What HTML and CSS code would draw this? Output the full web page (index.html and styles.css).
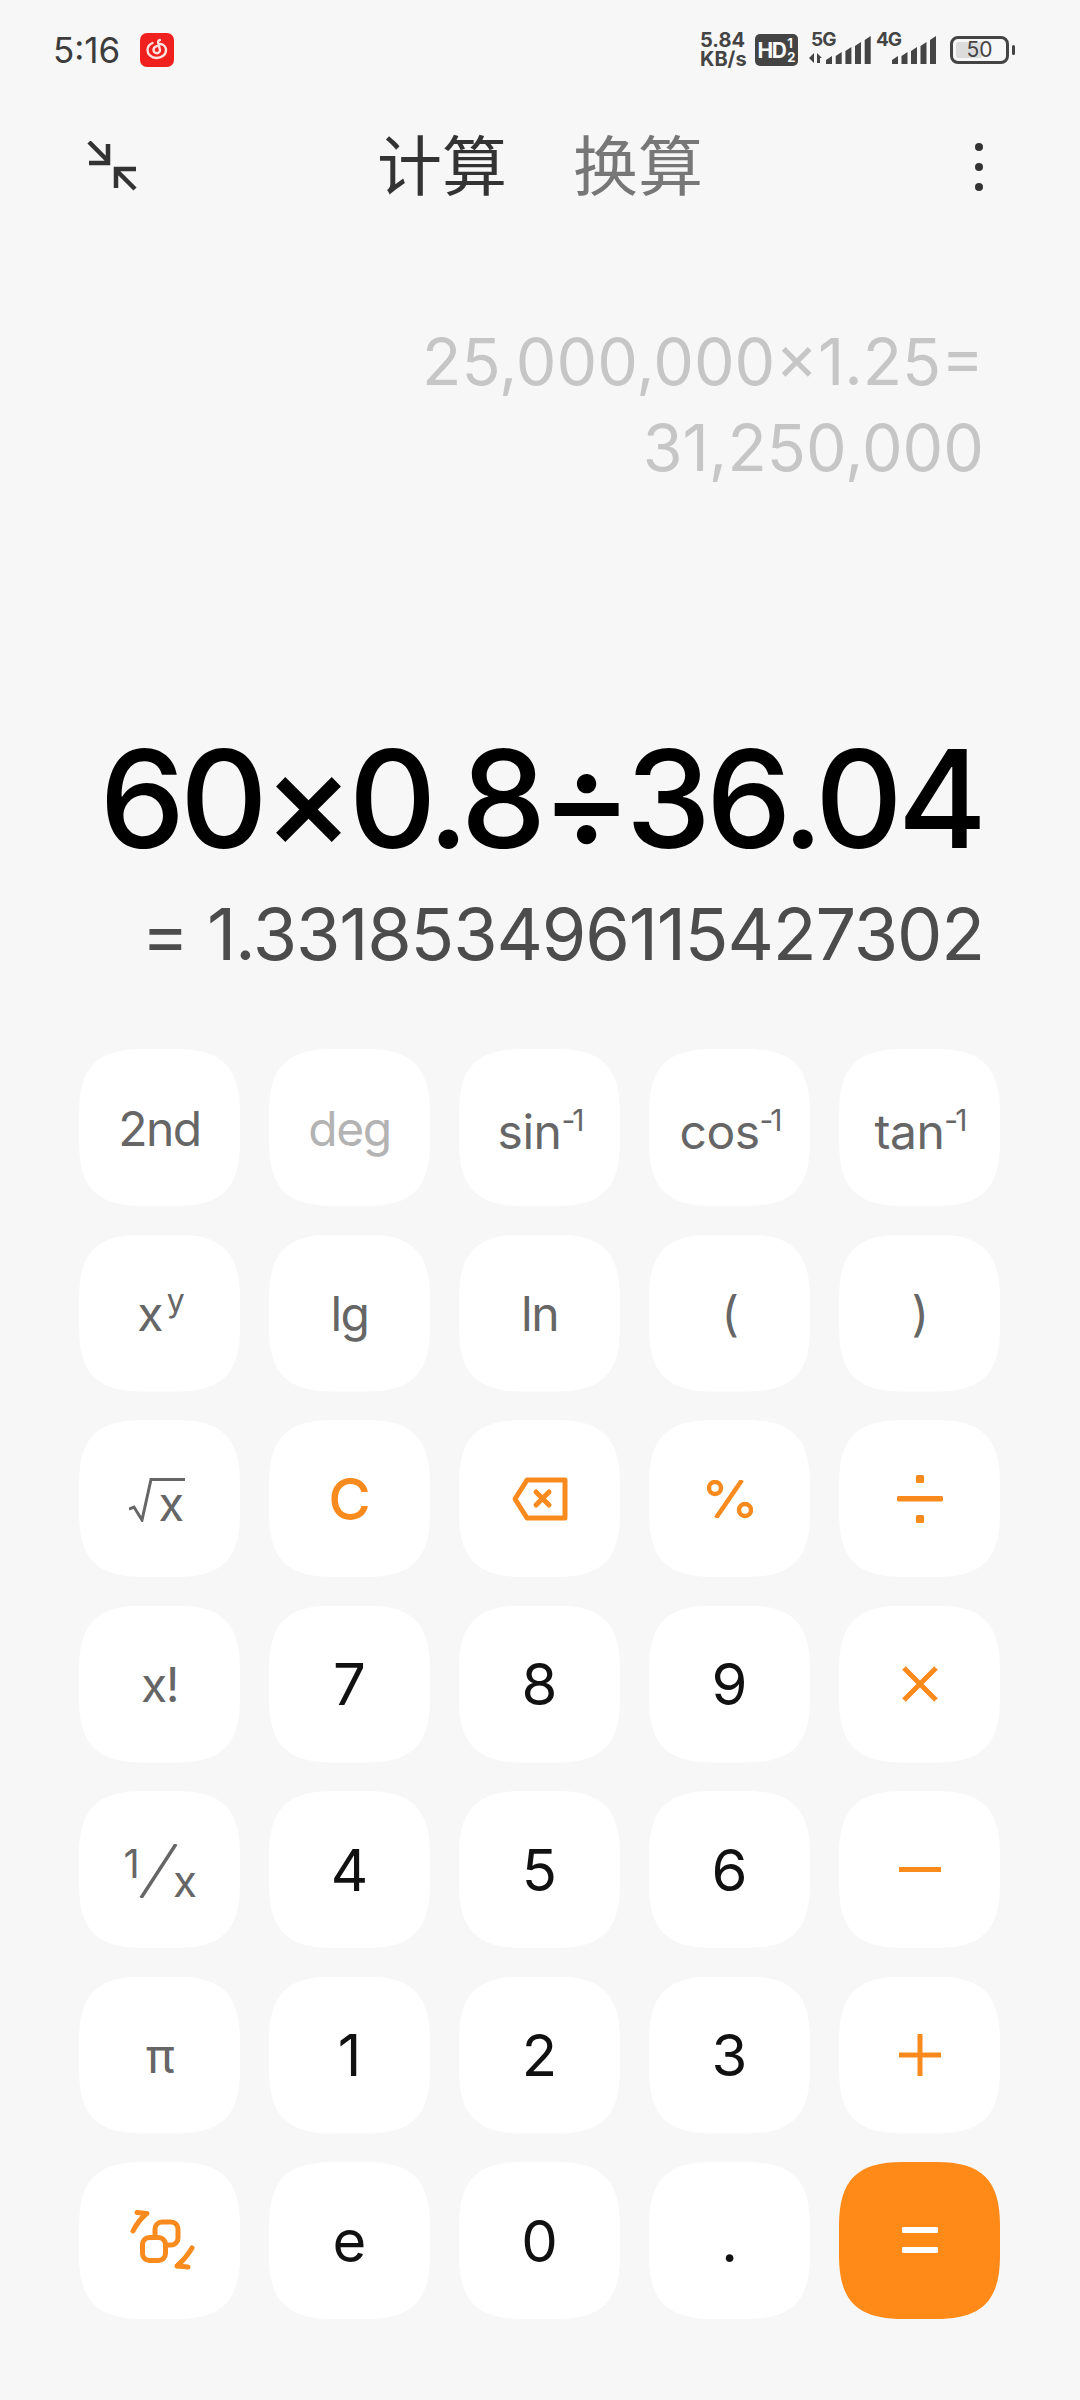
FILE: index.html
```html
<!DOCTYPE html>
<html lang="zh-CN">
<head>
  <meta charset="UTF-8" />
  <meta name="viewport" content="width=device-width, initial-scale=1.0"/>
  <title>计算器</title>
  <link rel="stylesheet" href="styles.css">
</head>
<body>
  <div class="status-bar">
    <div class="status-left">
      <span class="time">5:16</span>
      <svg class="app-icon" width="34" height="34" viewBox="0 0 34 34">
        <rect width="34" height="34" rx="7" fill="#f0201f"/>
        <path d="M20 7c-1.500.2-2.200 1.500-1.800 3l1.700 6.500c.5 2-1 3.700-3 3.700s-3.400-1.500-3.400-3.300c0-2 1.500-3.400 3.400-3.800M12.500 10c-3 1.300-5 3.900-5 7 0 4.500 4 8 9 8s9.500-3.300 9.500-7.800c0-3.200-2.400-5.800-5.700-6.200" fill="none" stroke="#ffe3df" stroke-width="2.400" stroke-linecap="round"/>
      </svg>
    </div>
    <div class="status-right">
      <div class="net-speed">5.84<br>KB/s</div>
      <div class="hd-badge"><span class="hd-text">HD</span><span class="hd-sims">1<br>2</span></div>
      <div class="signal first">
        <span class="signal-label">5G</span>
        <svg width="62" height="30" viewBox="0 0 62 30" class="signal-bars" fill="#444">
          <path d="M5 18v10L0 23zM8 18l5 5h-2v5H8z"/>
          <path d="M17 29v-4l6-4v8zM26.700 29v-8l6-4v12zM36.400 29V16l6-4v17zM46 29V11l6-4v22zM55.700 29V5l6-4v28z"/>
        </svg>
      </div>
      <div class="signal second">
        <span class="signal-label">4G</span>
        <svg width="60" height="30" viewBox="0 0 60 30" class="signal-bars" fill="#444">
          <path d="M16 29v-4l6-4v8zM25.500 29v-8l6-4v12zM35 29V16l6-4v17zM44.500 29V11l6-4v22zM54 29V5l6-4v28z"/>
        </svg>
      </div>
      <div class="battery">
        <div class="battery-body">
          <div class="battery-fill"></div>
          <span class="battery-num">50</span>
        </div>
        <div class="battery-cap"></div>
      </div>
    </div>
  </div>

  <div class="toolbar">
    <svg class="tool-icon" width="52" height="52" viewBox="0 0 52 52" fill="none" stroke="#333" stroke-width="4.500">
      <path d="M2 1l19 19M21 3v19H2M48 48L29 29M29 47V28h20"/>
    </svg>
    <div class="tabs">
      <span class="tab active">计算</span>
      <span class="tab">换算</span>
    </div>
    <div class="more">
      <i></i><i></i><i></i>
    </div>
  </div>

  <div class="display">
    <div class="history">
      <div>25,000,000×1.25=</div>
      <div>31,250,000</div>
    </div>
    <div class="expression">60×0.8÷36.04</div>
    <div class="result">= 1.331853496115427302</div>
  </div>

  <div class="keypad">
    <div class="key fn">2nd</div>
    <div class="key fn dim">deg</div>
    <div class="key fn has-sup">sin<sup>-1</sup></div>
    <div class="key fn has-sup">cos<sup>-1</sup></div>
    <div class="key fn has-sup">tan<sup>-1</sup></div>

    <div class="key fn">x<sup class="sup-y">y</sup></div>
    <div class="key fn">lg</div>
    <div class="key fn">ln</div>
    <div class="key fn">(</div>
    <div class="key fn">)</div>

    <div class="key fn">
      <span class="sqrt">
        <svg width="56" height="44" viewBox="0 0 56 44" fill="none" stroke="#666" stroke-width="3">
          <path d="M0 31l5-2 8 13 9-40.500h34"/>
        </svg>
        <span class="sqrt-x">x</span>
      </span>
    </div>
    <div class="key op">C</div>
    <div class="key op">
      <svg width="56" height="44" viewBox="0 0 56 44" fill="none" stroke="#f98a1e" stroke-width="5" stroke-linejoin="round" stroke-linecap="round">
        <path d="M15 3h38v38H15L3 22z"/>
        <path d="M24 15l13 13M37 15L24 28"/>
      </svg>
    </div>
    <div class="key op">
      <svg width="46" height="38" viewBox="0 0 46 38" fill="none" stroke="#f98a1e" stroke-width="4.500">
        <path d="M35 0L9 38"/>
        <circle cx="8" cy="8" r="6"/>
        <circle cx="38" cy="30" r="6"/>
      </svg>
    </div>
    <div class="key op">
      <svg width="46" height="48" viewBox="0 0 46 48" fill="#f98a1e">
        <rect y="21" width="46" height="5.500" rx="1.500"/>
        <rect x="19" width="8" height="8" rx="1.500"/>
        <rect x="19" y="40" width="8" height="8" rx="1.500"/>
      </svg>
    </div>

    <div class="key fn">x!</div>
    <div class="key num">7</div>
    <div class="key num">8</div>
    <div class="key num">9</div>
    <div class="key op">
      <svg width="36" height="36" viewBox="0 0 36 36" stroke="#f98a1e" stroke-width="5">
        <path d="M2 2l32 32M34 2L2 34"/>
      </svg>
    </div>

    <div class="key fn">
      <span class="frac">
        <span class="frac-one">1</span>
        <svg width="72" height="54" viewBox="0 0 72 54" stroke="#666" stroke-width="3.500">
          <path d="M52 0L17 54"/>
        </svg>
        <span class="frac-x">x</span>
      </span>
    </div>
    <div class="key num">4</div>
    <div class="key num">5</div>
    <div class="key num">6</div>
    <div class="key op">
      <svg width="42" height="6" viewBox="0 0 42 6"><rect width="42" height="5" fill="#f98a1e"/></svg>
    </div>

    <div class="key fn">π</div>
    <div class="key num">1</div>
    <div class="key num">2</div>
    <div class="key num">3</div>
    <div class="key op">
      <svg width="42" height="42" viewBox="0 0 42 42" fill="#f98a1e">
        <rect y="18.500" width="42" height="5"/>
        <rect x="18.500" width="5" height="42"/>
      </svg>
    </div>

    <div class="key op">
      <svg class="swap-icon" width="66" height="62" viewBox="0 0 66 62" fill="none" stroke="#f98a1e" stroke-width="5" stroke-linecap="round" stroke-linejoin="round">
        <rect x="26" y="12" width="23" height="23" rx="7"/>
        <rect x="13.500" y="27.500" width="23" height="23" rx="7" fill="#fff"/>
        <path d="M4 21Q9 11 17 4M8 2.500L18 3.500"/>
        <path d="M63 38Q57 48 49 55M48 56L59 57"/>
      </svg>
    </div>
    <div class="key num">e</div>
    <div class="key num">0</div>
    <div class="key num">.</div>
    <div class="key equals">
      <svg width="36" height="27" viewBox="0 0 36 27" fill="#fff">
        <rect width="36" height="6" rx="1"/>
        <rect y="20" width="36" height="6" rx="1"/>
      </svg>
    </div>
  </div>
</body>
</html>
```

FILE: styles.css
```css
body {
  margin: 0;
  width: 1080px;
  height: 2400px;
  background-color: #f7f7f7;
  font-family: "Inter", "Noto Sans CJK SC", sans-serif;
  overflow: hidden;
}

/* Status bar */
.status-bar {
  height: 100px;
  box-sizing: border-box;
  padding: 0 65px 0 53px;
  display: flex;
  justify-content: space-between;
  align-items: center;
}
.status-left {
  display: flex;
  align-items: center;
  gap: 20px;
}
.time {
  font-size: 35px;
  color: #3c3c3c;
}
.status-right {
  display: flex;
  align-items: center;
  color: #444;
}
.net-speed {
  font-size: 20px;
  font-weight: 700;
  line-height: 19px;
  width: 47px;
  margin-right: 8px;
  white-space: nowrap;
}
.hd-badge {
  width: 43px;
  height: 32px;
  background: #444;
  border-radius: 5px;
  color: #fafafa;
  font-weight: 700;
  display: flex;
  align-items: center;
  justify-content: center;
  margin-right: 11px;
}
.hd-text {
  font-size: 21px;
  letter-spacing: -1.500px;
}
.hd-sims {
  font-size: 13px;
  line-height: 14px;
  margin-left: 2px;
}
.signal {
  position: relative;
  display: flex;
}
.signal.first {
  margin-right: 5px;
}
.signal.second {
  margin-right: 14px;
}
.signal-label {
  position: absolute;
  left: 2px;
  top: -5px;
  font-size: 19px;
  font-weight: 700;
  line-height: 19px;
  letter-spacing: -1px;
}
.signal.second .signal-label {
  left: 0;
}
.battery {
  display: flex;
  align-items: center;
  gap: 3px;
}
.battery-body {
  position: relative;
  width: 59px;
  height: 28px;
  box-sizing: border-box;
  border: 3px solid #444;
  border-radius: 8px;
  overflow: hidden;
  display: flex;
  align-items: center;
  justify-content: center;
}
.battery-fill {
  position: absolute;
  left: 3px;
  top: 3px;
  bottom: 3px;
  width: 26px;
  background: #dcdcdc;
  border-radius: 2px;
}
.battery-num {
  position: relative;
  font-size: 21px;
  line-height: 22px;
}
.battery-cap {
  width: 3px;
  height: 10px;
  background: #444;
  border-radius: 2px;
}

/* Top tool row */
.toolbar {
  height: 134px;
  box-sizing: border-box;
  padding: 0 97px 0 87px;
  display: flex;
  align-items: center;
}
.tool-icon {
  display: block;
}
.tabs {
  display: flex;
  gap: 66px;
  margin-left: 238px;
}
.tab {
  font-size: 65px;
  color: #777;
  line-height: 70px;
}
.tab.active {
  color: #333;
}
.more {
  margin-left: auto;
  display: flex;
  flex-direction: column;
  gap: 12px;
}
.more i {
  display: block;
  width: 8px;
  height: 8px;
  border-radius: 50%;
  background: #333;
}

/* Display */
.display {
  height: 815px;
  box-sizing: border-box;
  padding: 85px 96px 0 60px;
  text-align: right;
  display: flex;
  flex-direction: column;
}
.history {
  font-size: 64.500px;
  line-height: 86px;
  color: #c6c6c6;
}
.expression {
  margin: 223px 2px 0 0;
  font-size: 136px;
  font-weight: 450;
  letter-spacing: -5px;
  line-height: 170px;
  color: #000;
  white-space: nowrap;
}
.result {
  margin-top: 5px;
  font-size: 72px;
  letter-spacing: -1.200px;
  line-height: 90px;
  color: #4c4c4c;
  white-space: nowrap;
}

/* Keys */
.keypad {
  padding: 0 79px;
  display: grid;
  grid-template-columns: repeat(5, 161px);
  grid-auto-rows: 157px;
  column-gap: 29px;
  row-gap: 28.5px;
}
.key {
  background: #fff;
  clip-path: path("M64 0H97C143 0 161 18 161 64V93C161 139 143 157 97 157H64C18 157 0 139 0 93V64C0 18 18 0 64 0Z");
  box-sizing: border-box;
  display: flex;
  align-items: center;
  justify-content: center;
  font-size: 48px;
  line-height: 1;
}
.key.fn {
  color: #666;
  padding-top: 2px;
  letter-spacing: -1.500px;
}
.key.has-sup {
  padding-top: 8px;
  letter-spacing: -0.500px;
}
.key.dim {
  color: #b3b3b3;
}
.key.num {
  color: #111;
  font-size: 58px;
}
.key.op {
  color: #f98a1e;
  font-size: 58px;
  font-weight: 500;
}
.key.equals {
  background: #ff8a17;
}
.key sup {
  font-size: 30px;
  line-height: 0;
  position: relative;
  top: -12px;
  letter-spacing: -3px;
  vertical-align: super;
}
.key sup.sup-y {
  font-size: 32px;
  margin-left: 5px;
  top: -13px;
}
.swap-icon {
  margin-left: 4px;
}
.sqrt, .frac {
  position: relative;
  display: block;
}
.sqrt {
  margin-right: 6px;
}
.sqrt svg, .frac svg {
  display: block;
}
.sqrt-x {
  position: absolute;
  left: 30px;
  bottom: -5px;
  font-size: 47px;
  line-height: 47px;
}
.frac-one {
  position: absolute;
  left: 0;
  top: 0;
  font-size: 40px;
  line-height: 40px;
}
.frac-x {
  position: absolute;
  right: 0;
  bottom: -5px;
  font-size: 44px;
  line-height: 44px;
}
```
